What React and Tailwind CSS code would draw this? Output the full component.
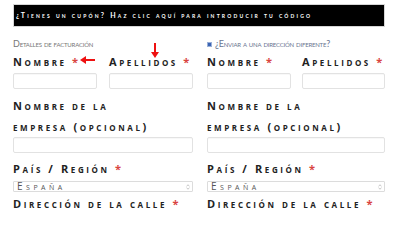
import React from "react";

const sc = "[font-variant:small-caps]";

function Label({ text, required = true, className = "" }) {
    return (
        <div className={`font-['Open_Sans',sans-serif] font-bold text-[11px] leading-[18px] tracking-[2.6px] text-[#222] whitespace-nowrap ${sc} ${className}`}>
            {text}
            {required && <span className="text-[#d9443f]"> *</span>}
        </div>
    )
}

function Input() {
    return <div className="h-[16px] border border-[#e2e2e2] rounded-[2px] bg-white shadow-[inset_0_1px_1px_rgba(0,0,0,0.03)]"></div>
}

function Select() {
    return (
        <div className="mt-[3px] h-[11px] border border-[#dcdcdc] rounded-[1px] flex items-center justify-between pl-[3px] pr-[2px]">
            <span className={`font-['Open_Sans',sans-serif] text-[10px] leading-[11px] tracking-[3.5px] text-[#555] ${sc}`}>España</span>
            <svg width="4" height="6" viewBox="0 0 4 6">
                <path d="M0.5 2.2 L2 0.8 L3.5 2.2 M0.5 3.8 L2 5.2 L3.5 3.8" stroke="#aaa" strokeWidth="0.7" fill="none" />
            </svg>
        </div>
    )
}

function AddressColumn({ heading }) {
    return (
        <div className="flex flex-col">
            {heading}
            <div className="mt-[3px] grid grid-cols-2 gap-x-[12px]">
                <div className="flex flex-col">
                    <Label text="Nombre" />
                    <div className="mt-[2px] w-[84px]"><Input /></div>
                </div>
                <div className="flex flex-col">
                    <Label text="Apellidos" />
                    <div className="mt-[2px]"><Input /></div>
                </div>
            </div>
            <div className={`mt-[6px] font-['Open_Sans',sans-serif] font-bold text-[11px] leading-[21px] tracking-[2.6px] text-[#222] whitespace-nowrap ${sc}`}>
                Nombre de la<br />empresa (opcional)
            </div>
            <Input />
            <Label text="País / Región" className="mt-[7px]" />
            <Select />
            <Label text="Dirección de la calle" className="mt-[3px]" />
        </div>
    )
}

function RedArrow({ className, rotate }) {
    return (
        <svg className={className} width="16" height="8" viewBox="0 0 16 8" style={{ transform: `rotate(${rotate}deg)` }}>
            <line x1="5" y1="4" x2="15" y2="4" stroke="#e11" strokeWidth="2" />
            <polygon points="0,4 6,0 6,8" fill="#e11" />
        </svg>
    )
}

export default function App() {
    return (
        <div className="relative w-[400px] h-[210px] overflow-hidden bg-white pl-[13px] pr-[15px] pt-[4px] font-['Lato','Open_Sans',sans-serif]">
            <div className="h-[23px] bg-black border border-[#d6d6d6] flex items-center pl-[2px]">
                <span className={`text-white font-bold text-[7px] tracking-[2.2px] whitespace-nowrap ${sc}`}>
                    ¿Tienes un cupón? Haz clic aquí para introducir tu código
                </span>
            </div>
            <div className="grid grid-cols-[180px_178px] gap-x-[14px] mt-[11px]">
                <AddressColumn
                    heading={<div className={`h-[12px] text-[9px] leading-[12px] tracking-[-0.2px] text-[#777] ${sc}`}>Detalles de facturación</div>}
                />
                <AddressColumn
                    heading={
                        <div className="h-[12px] flex items-center gap-[3px]">
                            <span className="w-[5px] h-[5px] bg-[#3b64b3] border border-[#9ab0d8]"></span>
                            <span className={`text-[9px] leading-[12px] tracking-[-0.2px] text-[#6a7590] ${sc}`}>¿Enviar a una dirección diferente?</span>
                        </div>
                    }
                />
            </div>
            <RedArrow className="absolute left-[80px] top-[56px]" rotate={0} />
            <RedArrow className="absolute left-[147px] top-[46px]" rotate={-90} />
        </div>
    )
}
